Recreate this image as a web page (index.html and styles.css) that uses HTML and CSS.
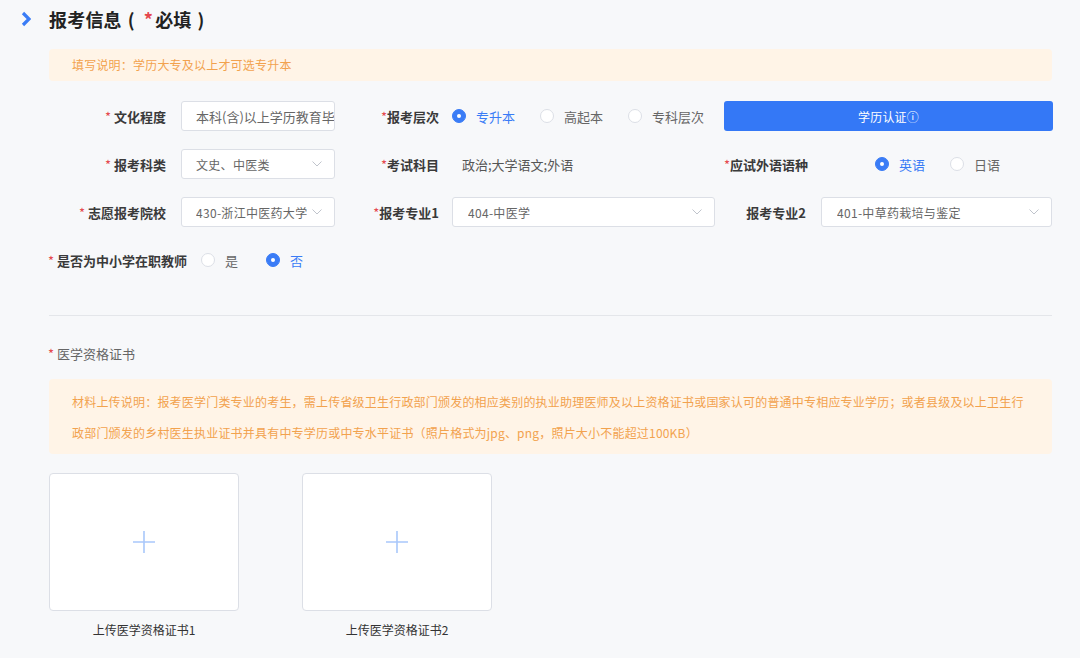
FILE: index.html
```html
<!DOCTYPE html>
<html lang="zh-CN">
<head>
<meta charset="utf-8">
<title>报考信息</title>
<link rel="stylesheet" href="styles.css">
</head>
<body>
<div class="page">
  <div class="header">
    <svg class="chev" width="10" height="16" viewBox="0 0 10 16"><path d="M2 2 L8 8 L2 14" fill="none" stroke="#3a7cf6" stroke-width="3.2" stroke-linejoin="miter"/></svg>
    <h1 class="title">报考信息<span class="paren pl">(</span><span class="req">*</span>必填<span class="paren pr">)</span></h1>
  </div>

  <div class="notice notice-one">填写说明：学历大专及以上才可选专升本</div>

  <div class="row row-first">
    <div class="lbl lbl-a"><span class="req">*</span> 文化程度</div>
    <div class="field field-a"><span class="val clip">本科(含)以上学历教育毕业生</span></div>
    <div class="lbl lbl-b"><span class="req">*</span>报考层次</div>
    <div class="radios radios-b">
      <span class="radio on"><i class="dot"></i>专升本</span>
      <span class="radio"><i class="dot"></i>高起本</span>
      <span class="radio"><i class="dot"></i>专科层次</span>
    </div>
    <button class="btn">学历认证ⓘ</button>
  </div>

  <div class="row">
    <div class="lbl lbl-a"><span class="req">*</span> 报考科类</div>
    <div class="field field-a"><span class="val">文史、中医类</span><svg class="arrow" width="10" height="6" viewBox="0 0 10 6"><path d="M0.5 0.5 L5 5 L9.5 0.5" fill="none" stroke="#c0c4cc" stroke-width="1"/></svg></div>
    <div class="lbl lbl-b"><span class="req">*</span>考试科目</div>
    <div class="plain">政治;大学语文;外语</div>
    <div class="lbl lbl-c"><span class="req">*</span>应试外语语种</div>
    <div class="radios">
      <span class="radio on"><i class="dot"></i>英语</span>
      <span class="radio"><i class="dot"></i>日语</span>
    </div>
  </div>

  <div class="row">
    <div class="lbl lbl-a"><span class="req">*</span> 志愿报考院校</div>
    <div class="field field-a"><span class="val">430-浙江中医药大学</span><svg class="arrow" width="10" height="6" viewBox="0 0 10 6"><path d="M0.5 0.5 L5 5 L9.5 0.5" fill="none" stroke="#c0c4cc" stroke-width="1"/></svg></div>
    <div class="lbl lbl-b"><span class="req">*</span>报考专业1</div>
    <div class="field field-b"><span class="val">404-中医学</span><svg class="arrow" width="10" height="6" viewBox="0 0 10 6"><path d="M0.5 0.5 L5 5 L9.5 0.5" fill="none" stroke="#c0c4cc" stroke-width="1"/></svg></div>
    <div class="lbl lbl-d">报考专业2</div>
    <div class="field field-c"><span class="val">401-中草药栽培与鉴定</span><svg class="arrow" width="10" height="6" viewBox="0 0 10 6"><path d="M0.5 0.5 L5 5 L9.5 0.5" fill="none" stroke="#c0c4cc" stroke-width="1"/></svg></div>
  </div>

  <div class="row row-last">
    <div class="lbl lbl-e"><span class="req">*</span> 是否为中小学在职教师</div>
    <div class="radios radios-e">
      <span class="radio"><i class="dot"></i>是</span>
      <span class="radio on"><i class="dot"></i>否</span>
    </div>
  </div>

  <div class="divider"></div>

  <div class="sub"><span class="req">*</span> 医学资格证书</div>

  <div class="notice notice-two">材料上传说明：报考医学门类专业的考生，需上传省级卫生行政部门颁发的相应类别的执业助理医师及以上资格证书或国家认可的普通中专相应专业学历；或者县级及以上卫生行<br>政部门颁发的乡村医生执业证书并具有中专学历或中专水平证书（照片格式为jpg、png，照片大小不能超过100KB）</div>

  <div class="uploads">
    <div class="upload">
      <div class="box"><svg width="22" height="22" viewBox="0 0 22 22"><path d="M11 0 V22 M0 11 H22" stroke="#a9c8fb" stroke-width="1.6"/></svg></div>
      <div class="cap">上传医学资格证书1</div>
    </div>
    <div class="upload">
      <div class="box"><svg width="22" height="22" viewBox="0 0 22 22"><path d="M11 0 V22 M0 11 H22" stroke="#a9c8fb" stroke-width="1.6"/></svg></div>
      <div class="cap">上传医学资格证书2</div>
    </div>
  </div>
</div>
</body>
</html>
```

FILE: styles.css
```css
* { box-sizing: border-box; }
html, body { margin: 0; padding: 0; }
body {
  background: #f7f8fa;
  font-family: "Noto Sans CJK SC", "Noto Sans", sans-serif;
  color: #333;
  width: 1080px;
  height: 658px;
  overflow: hidden;
}
.page { padding: 0 28px 0 49px; }

.header {
  display: flex;
  align-items: center;
  height: 38px;
  margin-left: -28px;
}
.chev { margin-right: 18px; }
.title {
  margin: 0;
  font-size: 18px;
  font-weight: 700;
  color: #222;
  letter-spacing: 0.2px;
  line-height: 38px;
}
.paren { font-weight: 700; }
.pl { margin-left: 6px; margin-right: 9px; }
.pr { margin-left: 6px; }
.req { color: #e5484d; font-weight: 400; }
.title .req { font-weight: 700; margin-right: 2px; }

.notice {
  background: #fff4e7;
  color: #f2a24e;
  font-size: 12px;
  letter-spacing: 0.2px;
  border-radius: 4px;
  padding-left: 23px;
}
.notice-one {
  margin-top: 11px;
  height: 32px;
  line-height: 32px;
}

.row {
  display: flex;
  align-items: center;
  height: 30px;
  margin-bottom: 18px;
}
.row-first { margin-top: 20px; }
.row-last { margin-bottom: 0; }

.lbl {
  font-size: 13px;
  font-weight: 700;
  color: #3a3a3a;
  white-space: nowrap;
  flex: none;
}
.lbl-a { width: 117px; text-align: right; margin-right: 15px; }
.lbl-b { width: 104px; text-align: right; margin-right: 13px; }
.lbl-c { width: 151px; margin-left: 9px; }
.lbl-d { width: 91px; text-align: right; margin-right: 15px; }
.lbl-e { margin-right: 14px; margin-left: -1px; }

.field {
  height: 30px;
  background: #fff;
  border: 1px solid #dcdfe6;
  border-radius: 3px;
  display: flex;
  align-items: center;
  justify-content: space-between;
  padding: 0 12px 0 14px;
  font-size: 12px;
  letter-spacing: 0.3px;
  color: #666;
  overflow: hidden;
  flex: none;
}
.field-a { width: 154px; }
.field-b { width: 263px; padding-left: 15px; }
.field-c { flex: 1; padding-left: 15px; }
.val { white-space: nowrap; overflow: hidden; }
.field-a .val { max-width: 118px; }
.field-a .clip { max-width: none; overflow: visible; font-size: 13px; letter-spacing: 0; }
.arrow { flex: none; margin-left: 4px; }

.radios { display: flex; align-items: center; flex: none; }
.radios-b { width: 263px; }
.radio {
  display: inline-flex;
  align-items: center;
  font-size: 13px;
  color: #666;
  margin-right: 25px;
  white-space: nowrap;
}
.radios-e .radio { margin-right: 28px; }
.dot {
  width: 14px;
  height: 14px;
  border-radius: 50%;
  border: 1px solid #dcdfe6;
  background: #fff;
  margin-right: 10px;
  position: relative;
  flex: none;
}
.radio.on { color: #3a7cf6; }
.radio.on .dot {
  background: #3a7cf6;
  border-color: #3a7cf6;
}
.radio.on .dot::after {
  content: "";
  position: absolute;
  left: 4px;
  top: 4px;
  width: 4px;
  height: 4px;
  border-radius: 50%;
  background: #fff;
}

.btn {
  margin-left: 9px;
  flex: 1;
  height: 30px;
  border: none;
  border-radius: 3px;
  background: #3478f6;
  color: #fff;
  font-family: inherit;
  font-size: 12px;
  letter-spacing: 0.2px;
  padding: 0;
  margin-right: -1px;
}

.plain {
  width: 263px;
  padding-left: 10px;
  font-size: 13px;
  color: #555;
  flex: none;
}

.divider {
  height: 1px;
  background: #e4e6ea;
  margin-top: 40px;
}

.sub {
  margin-top: 28px;
  font-size: 13px;
  color: #666;
  line-height: 20px;
  margin-left: -1px;
}

.notice-two {
  margin-top: 15px;
  padding-top: 7px;
  padding-bottom: 6px;
  line-height: 31px;
  white-space: nowrap;
}

.uploads {
  display: flex;
  gap: 63px;
  margin-top: 19px;
}
.upload { width: 190px; }
.box {
  width: 190px;
  height: 138px;
  background: #fff;
  border: 1px solid #dcdfe6;
  border-radius: 4px;
  display: flex;
  align-items: center;
  justify-content: center;
}
.cap {
  margin-top: 9px;
  text-align: center;
  font-size: 12px;
  color: #333;
  line-height: 20px;
}
```
